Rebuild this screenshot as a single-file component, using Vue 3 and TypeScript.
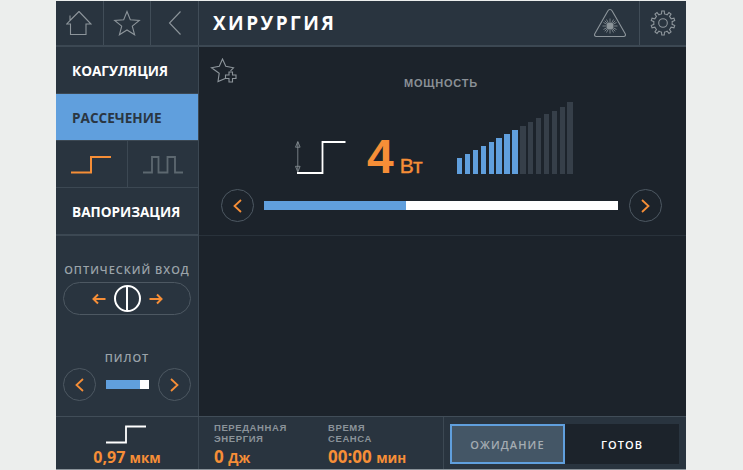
<template>
  <div class="page">
    <div class="screen">
      <header class="top">
        <div class="nav">
          <button class="nav-cell">
            <svg width="26" height="26" viewBox="0 0 26 26"><path d="M13 1.500 25 14h-5v10.500H4.500V14H.8l3.200-3.500V5.500M4 10.500 13 1.500" class="thin" /></svg>
          </button>
          <button class="nav-cell">
            <svg width="28" height="26" viewBox="0 0 28 26"><path d="M14 1.500l3.300 8.300 9 .6-7 5.700 2.300 8.700-7.600-4.800-7.600 4.800 2.300-8.700-7-5.700 9-.6z" class="thin" /></svg>
          </button>
          <button class="nav-cell last">
            <svg width="14" height="26" viewBox="0 0 14 26"><path d="M12.500 1.500 1.500 13l11 11.500" class="thin" /></svg>
          </button>
        </div>
        <h1 class="title">ХИРУРГИЯ</h1>
        <div class="top-tools">
          <div class="tool">
            <svg width="34" height="30" viewBox="0 0 34 30">
              <path d="M17 1.500c1 0 1.700.5 2.200 1.400l13 22.800c.8 1.400 0 2.800-1.500 2.800H3.300c-1.500 0-2.300-1.400-1.500-2.800l13-22.800c.5-.9 1.200-1.400 2.200-1.400z" class="thin" />
              <circle cx="17" cy="18" r="3.200" fill="#8d959b" />
              <path d="M17 10.500v15M9.500 18h15M11.700 12.700l10.600 10.600M22.300 12.700 11.700 23.300M13.500 11.500l7 13M20.500 11.500l-7 13M10.500 14.500l13 7M23.500 14.500l-13 7" stroke="#8d959b" stroke-width=".8" fill="none" />
            </svg>
          </div>
          <div class="tool last">
            <svg width="26" height="26" viewBox="0 0 26 26">
              <path :d="gearPath" class="thin" />
              <circle cx="13" cy="13" r="4.300" class="thin" />
            </svg>
          </div>
        </div>
      </header>

      <div class="middle">
        <aside class="side">
          <button class="menu-item">КОАГУЛЯЦИЯ</button>
          <button class="menu-item active">РАССЕЧЕНИЕ</button>
          <div class="modes">
            <div class="mode">
              <svg width="42" height="20" viewBox="0 0 42 20"><path d="M1 17.500h20V2h20" fill="none" stroke="#f68e37" stroke-width="2" /></svg>
            </div>
            <div class="mode">
              <svg width="42" height="20" viewBox="0 0 42 20"><path d="M1 17.500h9V2h6.500v15.500h9V2h7.500v15.500h8" fill="none" stroke="#5d6870" stroke-width="1.800" /></svg>
            </div>
          </div>
          <button class="menu-item">ВАПОРИЗАЦИЯ</button>
          <div class="side-controls">
            <div class="side-label optic-label">ОПТИЧЕСКИЙ ВХОД</div>
            <div class="optic">
              <span class="arrow">
                <svg width="14" height="12" viewBox="0 0 14 12"><path d="M13.500 6H1.500M6 1.500 1.500 6 6 10.500" fill="none" stroke="#f68e37" stroke-width="2" /></svg>
              </span>
              <span class="optic-ring"></span>
              <span class="arrow">
                <svg width="14" height="12" viewBox="0 0 14 12"><path d="M.5 6h12M8 1.500 12.500 6 8 10.500" fill="none" stroke="#f68e37" stroke-width="2" /></svg>
              </span>
            </div>
            <div class="side-label pilot-label">ПИЛОТ</div>
            <div class="pilot">
              <button class="round">
                <svg width="9" height="14" viewBox="0 0 9 14"><path d="M8 1 1.500 7 8 13" class="chev" /></svg>
              </button>
              <div class="pilot-bar"><span class="pilot-fill"></span></div>
              <button class="round">
                <svg width="9" height="14" viewBox="0 0 9 14"><path d="M1 1l6.500 6L1 13" class="chev" /></svg>
              </button>
            </div>
          </div>
        </aside>

        <main class="content">
          <section class="power">
            <svg class="fav" width="27" height="25" viewBox="0 0 27 25">
              <path d="M15.800 20.200 8 23.500l1.200-8.300L1.500 9.800l7.800-1.500L12.500 1l3.300 7.300 7.700 1.500-3 3" class="thin" />
              <path d="M19 14h3.500v3H26v3.500h-3.500V24H19v-3.500h-3.500V17H19z" class="thin" />
            </svg>
            <div class="power-label">МОЩНОСТЬ</div>
            <div class="readout">
              <svg class="pulse" width="49" height="33" viewBox="0 0 49 33">
                <path d="M0 32h25.500V1H48.500" fill="none" stroke="#fff" stroke-width="1.800" />
                <path d="M.8 1v29" stroke="#8d959b" stroke-width=".8" fill="none" />
                <path d="M.8.5-1.500 6.200h4.600zM.8 31-1.500 25.300h4.600z" fill="none" stroke="#8d959b" stroke-width=".8" />
              </svg>
              <div class="value"><span class="big">4</span><span class="unit">Вт</span></div>
              <div class="bars">
                <span
                  v-for="(h, i) in barHeights"
                  :key="i"
                  class="bar"
                  :class="{ on: i < 8 }"
                  :style="{ height: h + 'px' }"
                ></span>
              </div>
            </div>
            <div class="slider-row">
              <button class="round">
                <svg width="9" height="14" viewBox="0 0 9 14"><path d="M8 1 1.500 7 8 13" class="chev" /></svg>
              </button>
              <div class="slider"><span class="slider-fill"></span></div>
              <button class="round">
                <svg width="9" height="14" viewBox="0 0 9 14"><path d="M1 1l6.500 6L1 13" class="chev" /></svg>
              </button>
            </div>
          </section>
        </main>
      </div>

      <footer class="bottom">
        <div class="wave">
          <svg width="42" height="19" viewBox="0 0 42 19"><path d="M1 17.500h20V1.500h20" fill="none" stroke="#fff" stroke-width="1.800" /></svg>
          <div class="wave-value">0,97 <small>мкм</small></div>
        </div>
        <div class="stats">
          <div class="stat energy">
            <div class="stat-label">ПЕРЕДАННАЯ<br />ЭНЕРГИЯ</div>
            <div class="stat-value">0 <small>Дж</small></div>
          </div>
          <div class="stat">
            <div class="stat-label">ВРЕМЯ<br />СЕАНСА</div>
            <div class="stat-value">00:00 <small>мин</small></div>
          </div>
        </div>
        <div class="state">
          <div class="state-box">
            <button class="state-btn standby">ОЖИДАНИЕ</button>
            <button class="state-btn ready">ГОТОВ</button>
          </div>
        </div>
      </footer>
    </div>
  </div>
</template>

<script setup lang="ts">
const barHeights: number[] = [16, 20, 24, 28, 32, 36, 40, 44, 48, 52, 56, 60, 63, 67, 72]

// gear with 10 teeth
const makeGear = (teeth: number, outer: number, inner: number): string => {
  const pts: string[] = []
  const step = (Math.PI * 2) / teeth
  for (let i = 0; i < teeth; i++) {
    const a = i * step - Math.PI / 2
    const offs: [number, number][] = [
      [-0.5, inner],
      [-0.26, inner],
      [-0.17, outer],
      [0.17, outer],
      [0.26, inner],
    ]
    offs.forEach(([o, r]) => {
      const x = 13 + Math.cos(a + o * step) * r
      const y = 13 + Math.sin(a + o * step) * r
      pts.push(`${x.toFixed(2)} ${y.toFixed(2)}`)
    })
  }
  return `M${pts.join('L')}Z`
}

const gearPath = makeGear(10, 12, 9.2)
</script>

<style>
html,
body {
  margin: 0;
  background: #eceeed;
}
</style>

<style scoped>
.page {
  width: 743px;
  height: 470px;
  padding: 1px 57px 0 56px;
  box-sizing: border-box;
  background: #eceeed;
  font-family: "Open Sans", "Liberation Sans", sans-serif;
  overflow: hidden;
}

button {
  border: none;
  background: none;
  padding: 0;
  font-family: inherit;
  cursor: pointer;
}

.screen {
  display: flex;
  flex-direction: column;
  width: 630px;
  height: 469px;
  background: #1c232b;
}

.thin {
  fill: none;
  stroke: #8d959b;
  stroke-width: 1.100;
}

.chev {
  fill: none;
  stroke: #f68e37;
  stroke-width: 1.800;
}

/* header */
.top {
  display: flex;
  height: 46px;
  background: #29343f;
  border-bottom: 2px solid #3c4853;
  box-sizing: border-box;
  flex-shrink: 0;
}

.nav {
  display: flex;
  width: 143px;
  border-right: 1px solid #414d58;
  box-sizing: border-box;
  flex-shrink: 0;
}

.nav-cell {
  flex: 1;
  display: flex;
  align-items: center;
  justify-content: center;
  border-right: 1px solid #414d58;
}

.nav-cell.last {
  border-right: none;
}

.title {
  flex: 1;
  margin: 0 0 0 14px;
  font-size: 19px;
  line-height: 44px;
  font-weight: 700;
  letter-spacing: 2.450px;
  color: #fff;
}

.top-tools {
  display: flex;
}

.tool {
  display: flex;
  align-items: center;
  justify-content: center;
  width: 59px;
  border-right: 1px solid #414d58;
}

.tool.last {
  width: 46px;
  border-right: none;
}

/* sidebar */
.middle {
  flex: 1;
  display: flex;
  min-height: 0;
}

.side {
  display: flex;
  flex-direction: column;
  width: 143px;
  flex-shrink: 0;
  background: #29343f;
  border-right: 1px solid #3c4853;
  box-sizing: border-box;
}

.menu-item {
  height: 47px;
  flex-shrink: 0;
  padding: 0 0 0 16px;
  text-align: left;
  font-size: 13.600px;
  font-weight: 700;
  color: #fff;
  border-bottom: 1px solid #3c4853;
  box-sizing: border-box;
}

.menu-item.active {
  background: #609fdd;
  color: #2a3642;
}

.modes {
  display: flex;
  height: 47px;
  flex-shrink: 0;
  border-bottom: 1px solid #3c4853;
  box-sizing: border-box;
}

.mode {
  flex: 1;
  display: flex;
  align-items: center;
  justify-content: center;
  padding-top: 2px;
}

.mode:first-child {
  border-right: 1px solid #3c4853;
}

.side-controls {
  display: flex;
  flex-direction: column;
  align-items: center;
  padding: 27px 6px 0;
  border-top: 2px solid #3c4853;
  margin-top: -1px;
}

.side-label {
  font-size: 11px;
  font-weight: 600;
  letter-spacing: 1px;
  color: #9ba3a9;
  line-height: 14px;
}

.optic {
  display: flex;
  align-items: center;
  justify-content: center;
  gap: 8px;
  width: 128px;
  height: 33px;
  margin-top: 5px;
  border: 1.500px solid #4d5862;
  border-radius: 17px;
  box-sizing: border-box;
}

.arrow {
  display: flex;
}

.optic-ring {
  position: relative;
  width: 27px;
  height: 27px;
  border: 2px solid #fff;
  border-radius: 50%;
  box-sizing: border-box;
}

.optic-ring::after {
  content: "";
  position: absolute;
  left: 50%;
  top: 0;
  bottom: 0;
  width: 2px;
  margin-left: -1px;
  background: #fff;
}

.pilot-label {
  margin-top: 36px;
}

.pilot {
  display: flex;
  align-items: center;
  justify-content: space-between;
  width: 128px;
  margin-top: 3px;
}

.round {
  display: flex;
  align-items: center;
  justify-content: center;
  width: 33px;
  height: 33px;
  border: 1.500px solid #4d5862;
  border-radius: 50%;
  box-sizing: border-box;
  flex-shrink: 0;
}

.pilot-bar {
  width: 43px;
  height: 9px;
  background: #fff;
}

.pilot-fill {
  display: block;
  width: 34px;
  height: 100%;
  background: #609fdd;
}

/* power panel */
.content {
  flex: 1;
  min-width: 0;
}

.power {
  position: relative;
  display: flex;
  flex-direction: column;
  align-items: center;
  height: 189px;
  padding: 29px 3px 0 0;
  border-bottom: 1px solid #29323b;
  box-sizing: border-box;
}

.fav {
  position: absolute;
  left: 11px;
  top: 11px;
}

.power-label {
  font-family: "Liberation Sans", sans-serif;
  font-size: 11px;
  font-weight: 700;
  letter-spacing: .8px;
  line-height: 14px;
  color: #8a9096;
}

.readout {
  display: flex;
  align-items: flex-end;
  width: 276px;
  height: 72px;
  margin: 12px 12px 0 0;
}

.pulse {
  flex-shrink: 0;
  overflow: visible;
}

.value {
  display: flex;
  align-items: baseline;
  width: 90px;
  flex-shrink: 0;
  margin: 0 0 -8px 21px;
  font-family: "Liberation Sans", sans-serif;
  color: #f68e37;
  height: 50px;
}

.big {
  font-size: 48px;
  font-weight: 700;
  line-height: 50px;
}

.unit {
  margin-left: 6px;
  font-size: 21px;
  -webkit-text-stroke: .4px #f68e37;
}

.bars {
  display: flex;
  align-items: flex-end;
  gap: 2.500px;
}

.bar {
  width: 5.400px;
  background: #363f49;
}

.bar.on {
  background: #609fdd;
}

.slider-row {
  display: flex;
  align-items: center;
  justify-content: space-between;
  width: 441px;
  margin-top: 15px;
}

.slider {
  width: 354px;
  height: 9px;
  background: #fff;
}

.slider-fill {
  display: block;
  width: 142px;
  height: 100%;
  background: #609fdd;
}

/* footer */
.bottom {
  display: flex;
  height: 54px;
  flex-shrink: 0;
  background: #29343f;
  border-top: 1px solid #414d58;
  border-bottom: 1px solid #8a939a;
  box-sizing: border-box;
}

.wave {
  display: flex;
  flex-direction: column;
  align-items: center;
  width: 143px;
  padding-top: 8px;
  border-right: 1px solid #3c4853;
  box-sizing: border-box;
  flex-shrink: 0;
}

.wave svg {
  margin-right: 2px;
}

.wave-value,
.stat-value {
  font-size: 16px;
  font-weight: 700;
  color: #f68e37;
  line-height: 18px;
}

.wave-value {
  margin-top: 4px;
}

small {
  font-size: 13.500px;
}

.stats {
  display: flex;
  width: 245px;
  padding: 5px 0 0 15px;
  border-right: 1px solid #3c4853;
  box-sizing: border-box;
  flex-shrink: 0;
}

.stat {
  display: flex;
  flex-direction: column;
}

.energy {
  width: 114px;
}

.stat-label {
  font-family: "Liberation Sans", sans-serif;
  font-size: 9.500px;
  font-weight: 700;
  letter-spacing: .6px;
  line-height: 11px;
  color: #8b939a;
}

.stat-value {
  margin-top: 4px;
  font-size: 17px;
}

.state {
  flex: 1;
  padding: 7px 7px 0 6px;
}

.state-box {
  display: flex;
  height: 40px;
  background: #1c232b;
}

.state-btn {
  font-size: 11px;
  font-weight: 600;
  letter-spacing: 1.100px;
  box-sizing: border-box;
}

.standby {
  width: 115px;
  background: #445666;
  border: 2.500px solid #609fdd;
  color: #a4acb2;
}

.ready {
  flex: 1;
  color: #fff;
}
</style>
